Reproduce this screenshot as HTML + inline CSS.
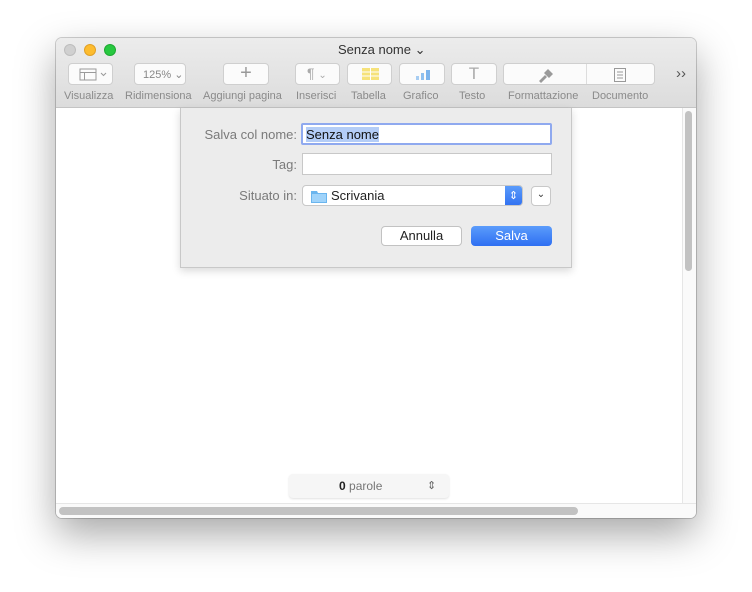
<!DOCTYPE html>
<html><head><meta charset="utf-8"><style>
*{margin:0;padding:0;box-sizing:border-box}
body{width:752px;height:592px;background:#fff;font-family:"Liberation Sans",sans-serif;position:relative;overflow:hidden}
.a{position:absolute}
.win{left:56px;top:38px;width:640px;height:480px;border-radius:6px;background:#fff;box-shadow:0 16px 40px rgba(0,0,0,.35),0 0 0 1px rgba(0,0,0,.18);overflow:hidden}
.tb{left:0;top:0;width:640px;height:70px;background:linear-gradient(#ececec,#dcdcdc);border-bottom:1px solid #c4c4c4}
.btn{background:#fbfbfb;border:1px solid #cfcfcf;border-radius:4px;height:22px;top:25px}
.lbl{top:52px;font-size:11px;color:#8a8a8a;white-space:nowrap}
.dot{width:12px;height:12px;border-radius:50%;top:6px}
.f{font-size:13px;color:#7a7a7a;text-align:right;width:120px}
.inp{background:#fff;border:1px solid #c8c8c8;height:22px}
</style></head><body>
<div class="a win">
 <div class="a tb">
  <div class="a dot" style="left:8px;background:#d0d0d0;border:1px solid #bdbdbd"></div>
  <div class="a dot" style="left:28px;background:#fdbc2e;border:1px solid #e1a025"></div>
  <div class="a dot" style="left:48px;background:#28c840;border:1px solid #1ea932"></div>
  <div class="a" style="left:282px;top:4px;font-size:13px;color:#333">Senza nome ⌄</div>
  <div class="a btn" style="left:12px;width:45px"><svg width="45" height="20"><rect x="11" y="5" width="16" height="11" fill="none" stroke="#9a9a9a"/><line x1="11" y1="8.5" x2="27" y2="8.5" stroke="#9a9a9a"/><line x1="15.5" y1="8.5" x2="15.5" y2="16" stroke="#9a9a9a"/><path d="M32 9l2.5 2.5 2.5-2.5" fill="none" stroke="#999"/></svg></div>
  <div class="a btn" style="left:78px;width:52px;font-size:11px;color:#888;padding:4px 0 0 8px">125% ⌄</div>
  <div class="a btn" style="left:167px;width:46px;text-align:center;font-size:20px;color:#999;line-height:18px">+</div>
  <div class="a btn" style="left:239px;width:45px;font-size:14px;color:#aaa;padding:1px 0 0 11px">¶ <span style="font-size:10px">⌄</span></div>
  <div class="a btn" style="left:291px;width:45px"><svg width="45" height="20"><rect x="14" y="4" width="17" height="12" fill="#f6e27a"/><path d="M14 8h17M14 12h17M22.5 4v12" stroke="#fff"/></svg></div>
  <div class="a btn" style="left:343px;width:46px"><svg width="46" height="20"><rect x="16" y="12" width="3" height="4" fill="#a7cdf2"/><rect x="21" y="9" width="3" height="7" fill="#8fc0ef"/><rect x="26" y="6" width="4" height="10" fill="#7cb4ec"/></svg></div>
  <div class="a btn" style="left:395px;width:46px;text-align:center;font-size:17px;color:#aaa;line-height:20px">T</div>
  <div class="a btn" style="left:447px;width:152px"><div class="a" style="left:82px;top:0;width:1px;height:20px;background:#ddd"></div><svg class="a" style="left:32px;top:3px" width="20" height="16"><path d="M3 14l6-6 2 2-6 6zM8 6l4-4 5 5-4 4z" fill="#9a9a9a"/></svg><svg class="a" style="left:109px;top:3px" width="14" height="16"><rect x="1.5" y="1.5" width="11" height="13" fill="none" stroke="#999"/><path d="M4 5h6M4 8h6M4 11h6" stroke="#999"/></svg></div>
  <div class="a" style="left:620px;top:27px;font-size:15px;color:#555">››</div>
  <div class="a lbl" style="left:8px">Visualizza</div>
  <div class="a lbl" style="left:69px">Ridimensiona</div>
  <div class="a lbl" style="left:147px">Aggiungi pagina</div>
  <div class="a lbl" style="left:240px">Inserisci</div>
  <div class="a lbl" style="left:295px">Tabella</div>
  <div class="a lbl" style="left:347px">Grafico</div>
  <div class="a lbl" style="left:403px">Testo</div>
  <div class="a lbl" style="left:452px">Formattazione</div>
  <div class="a lbl" style="left:536px">Documento</div>
 </div>
 <div class="a" style="left:626px;top:70px;width:14px;height:395px;background:#fafafa;border-left:1px solid #e6e6e6"></div>
 <div class="a" style="left:629px;top:73px;width:7px;height:160px;border-radius:4px;background:#c2c2c2"></div>
 <div class="a" style="left:0;top:465px;width:640px;height:15px;background:#fafafa;border-top:1px solid #e6e6e6"></div>
 <div class="a" style="left:3px;top:469px;width:519px;height:8px;border-radius:4px;background:#c2c2c2"></div>
 <div class="a" style="left:233px;top:436px;width:160px;height:24px;background:#f6f6f6;border-radius:4px;box-shadow:0 1px 2px rgba(0,0,0,.12);font-size:12px;color:#777;padding:5px 0 0 50px">
  <b style="color:#222">0</b> parole<span class="a" style="left:138px;top:5px;font-size:11px;color:#666">⇕</span></div>
 <div class="a" style="left:124px;top:70px;width:392px;height:160px;background:#ececec;border:1px solid #c8c8c8;border-top:none;box-shadow:0 3px 8px rgba(0,0,0,.15)">
  <div class="a f" style="left:-4px;top:19px">Salva col nome:</div>
  <div class="a inp" style="left:120px;top:15px;width:251px;border:2px solid #8fa9ef;border-radius:2px;font-size:13px;padding:2px 3px"><span style="background:#b4cdf7;color:#111">Senza nome</span></div>
  <div class="a f" style="left:-4px;top:49px">Tag:</div>
  <div class="a inp" style="left:121px;top:45px;width:250px"></div>
  <div class="a f" style="left:-4px;top:80px">Situato in:</div>
  <div class="a inp" style="left:121px;top:77px;width:221px;border-radius:4px;height:21px;overflow:hidden;font-size:13px;color:#222">
   <svg class="a" style="left:8px;top:4px" width="16" height="13"><path d="M0 1h6l1 2h9v10H0z" fill="#6ab5ee"/><rect x="1" y="4" width="14" height="8" fill="#9fd3fa"/></svg>
   <span class="a" style="left:28px;top:2px">Scrivania</span>
   <div class="a" style="right:0;top:0;width:17px;height:21px;background:linear-gradient(#5a9bfb,#2f6ff0);color:#fff;font-size:11px;text-align:center;line-height:20px">⇕</div></div>
  <div class="a inp" style="left:350px;top:78px;width:20px;height:20px;border-radius:4px;font-size:10px;text-align:center;line-height:16px;color:#333">⌄</div>
  <div class="a" style="left:200px;top:118px;width:81px;height:20px;background:#fff;border:1px solid #c2c2c2;border-radius:4px;font-size:13px;text-align:center;line-height:18px;color:#222">Annulla</div>
  <div class="a" style="left:290px;top:118px;width:81px;height:20px;background:linear-gradient(#5b9cfb,#2e6ff2);border-radius:4px;font-size:13px;text-align:center;line-height:20px;color:#fff">Salva</div>
 </div>
</div>
</body></html>
